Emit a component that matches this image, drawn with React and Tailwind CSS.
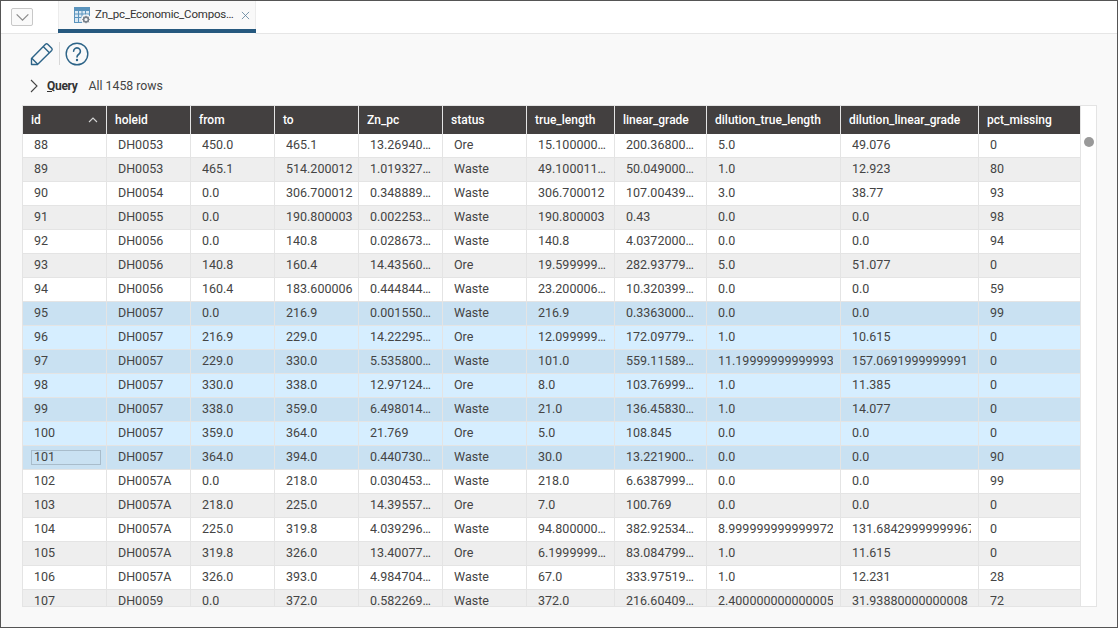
const columns = [
  { name: "id", width: "w-[84px]" },
  { name: "holeid", width: "w-[84px]" },
  { name: "from", width: "w-[84px]" },
  { name: "to", width: "w-[84px]" },
  { name: "Zn_pc", width: "w-[84px]" },
  { name: "status", width: "w-[84px]" },
  { name: "true_length", width: "w-[88px]" },
  { name: "linear_grade", width: "w-[92px]" },
  { name: "dilution_true_length", width: "w-[134px]" },
  { name: "dilution_linear_grade", width: "w-[138px]" },
  { name: "pct_missing", width: "w-[102px]" },
];

const rows = [
  ["88", "DH0053", "450.0", "465.1", "13.2694000000", "Ore", "15.1000000000", "200.3680000000", "5.0", "49.076", "0"],
  ["89", "DH0053", "465.1", "514.200012", "1.0193270000", "Waste", "49.1000110000", "50.0490000000", "1.0", "12.923", "80"],
  ["90", "DH0054", "0.0", "306.700012", "0.3488890000", "Waste", "306.700012", "107.0043900000", "3.0", "38.77", "93"],
  ["91", "DH0055", "0.0", "190.800003", "0.0022530000", "Waste", "190.800003", "0.43", "0.0", "0.0", "98"],
  ["92", "DH0056", "0.0", "140.8", "0.0286730000", "Waste", "140.8", "4.0372000000", "0.0", "0.0", "94"],
  ["93", "DH0056", "140.8", "160.4", "14.4356000000", "Ore", "19.5999990000", "282.9377900000", "5.0", "51.077", "0"],
  ["94", "DH0056", "160.4", "183.600006", "0.4448440000", "Waste", "23.2000060000", "10.3203990000", "0.0", "0.0", "59"],
  ["95", "DH0057", "0.0", "216.9", "0.0015500000", "Waste", "216.9", "0.3363000000", "0.0", "0.0", "99"],
  ["96", "DH0057", "216.9", "229.0", "14.2229500000", "Ore", "12.0999990000", "172.0977900000", "1.0", "10.615", "0"],
  ["97", "DH0057", "229.0", "330.0", "5.5358000000", "Waste", "101.0", "559.1158900000", "11.19999999999993", "157.0691999999991", "0"],
  ["98", "DH0057", "330.0", "338.0", "12.9712400000", "Ore", "8.0", "103.7699900000", "1.0", "11.385", "0"],
  ["99", "DH0057", "338.0", "359.0", "6.4980140000", "Waste", "21.0", "136.4583000000", "1.0", "14.077", "0"],
  ["100", "DH0057", "359.0", "364.0", "21.769", "Ore", "5.0", "108.845", "0.0", "0.0", "0"],
  ["101", "DH0057", "364.0", "394.0", "0.4407300000", "Waste", "30.0", "13.2219000000", "0.0", "0.0", "90"],
  ["102", "DH0057A", "0.0", "218.0", "0.0304530000", "Waste", "218.0", "6.6387999000", "0.0", "0.0", "99"],
  ["103", "DH0057A", "218.0", "225.0", "14.3955700000", "Ore", "7.0", "100.769", "0.0", "0.0", "0"],
  ["104", "DH0057A", "225.0", "319.8", "4.0392960000", "Waste", "94.8000000000", "382.9253400000", "8.999999999999972", "131.68429999999967", "0"],
  ["105", "DH0057A", "319.8", "326.0", "13.4007700000", "Ore", "6.1999999000", "83.0847990000", "1.0", "11.615", "0"],
  ["106", "DH0057A", "326.0", "393.0", "4.9847040000", "Waste", "67.0", "333.9751900000", "1.0", "12.231", "28"],
  ["107", "DH0059", "0.0", "372.0", "0.5822690000", "Waste", "372.0", "216.6040900000", "2.400000000000005", "31.93880000000008", "72"],
];

const rowColor = (id, index) => {
  const selected = id >= 95 && id <= 101;
  if (selected) return index % 2 ? "bg-[#c9e1f2]" : "bg-[#d6eeff]";
  return index % 2 ? "bg-[#eeeeee]" : "bg-white";
};

const cellPadding = (i) => {
  if (i === 0) return "pl-[8px] pr-[5px]";
  if (i === 3) return "pl-[11px] pr-[3px]";
  return "pl-[11px] pr-[7px]";
};

const TableIcon = () => (
  <svg width="17" height="17" viewBox="0 0 17 17" fill="none">
    <rect x="0.5" y="0.5" width="15" height="15" fill="#dbe9f4" stroke="#5b94bd" />
    <rect x="0.5" y="0.5" width="15" height="3.5" fill="#5b94bd" />
    <path d="M4.5 1v14M8 1v14M11.5 1v14M1 7h14M1 10.5h14" stroke="#5b94bd" />
    <circle cx="12" cy="12.5" r="5" fill="#f9f9f9" />
    <circle cx="12" cy="12.5" r="2.4" stroke="#77808a" strokeWidth="1.6" />
    <path d="M12 8.8v1.2M12 15v1.2M8.3 12.5h1.2M14.5 12.5h1.2M9.4 9.9l.8.8M13.8 14.3l.8.8M14.6 9.9l-.8.8M10.2 14.3l-.8.8" stroke="#77808a" strokeWidth="1.1" />
  </svg>
);

const PencilIcon = () => (
  <svg width="24" height="24" viewBox="0 0 24 24" fill="none" stroke="#2d6488" strokeWidth="1.4" strokeLinejoin="round">
    <path d="M1.5 22.5v-6L15.5 2.2a1.6 1.6 0 0 1 2.2 0l4 4a1.6 1.6 0 0 1 0 2.2L7.5 22.5z" />
    <path d="M13.2 4.6l6.2 6.2M1.8 16.3l5.9 5.9" />
  </svg>
);

const HelpIcon = () => (
  <svg width="24" height="24" viewBox="0 0 24 24" fill="none" stroke="#2d6488" strokeWidth="1.4" strokeLinecap="round">
    <circle cx="12" cy="12" r="10.8" />
    <path d="M8.6 9.2a3.4 3.4 0 1 1 5.4 2.8c-1.3.9-2 1.6-2 3" strokeWidth="1.6" />
    <circle cx="12" cy="18" r="0.6" fill="#2d6488" strokeWidth="1.2" />
  </svg>
);

export default function App() {
  return (
    <div className="w-[1118px] h-[628px] flex flex-col border border-[#555555] bg-[#f9f9f9] text-[#444444] font-['Roboto',sans-serif] text-[12.5px] overflow-hidden">
      <div className="h-[33px] shrink-0 flex bg-white border-b border-[#e6e6e6]">
        <div className="w-[57px] flex items-start pt-[7px] pl-[10px]">
          <div className="w-[22px] h-[18px] flex items-center justify-center rounded-[2px] border border-[#c8c8c8] bg-[#fafafa]">
            <svg width="15" height="9" viewBox="0 0 16 10" fill="none" stroke="#8c8c8c" strokeWidth="1.4">
              <path d="M1.5 1.5L8 8l6.5-6.5" />
            </svg>
          </div>
        </div>
        <div className="w-[198px] h-[33px] flex flex-col bg-[#f9f9f9] border-x border-[#ececec]">
          <div className="h-[28px] flex items-center pl-[15px] gap-[4px]">
            <TableIcon />
            <span className="w-[139px] truncate text-[#333333] text-[11.5px] tracking-[-0.2px]">Zn_pc_Economic_Composites</span>
            <svg className="ml-[3px]" width="9" height="9" viewBox="0 0 10 10" stroke="#5b7f99" strokeWidth="0.9">
              <path d="M1 1l8 8M9 1l-8 8" />
            </svg>
          </div>
          <div className="h-[4px] bg-[#26597f] -mx-px" />
        </div>
      </div>

      <div className="h-[39px] shrink-0 flex items-center pl-[29px]">
        <PencilIcon />
        <div className="w-px h-[23px] bg-[#d8d8d8] ml-[5px] mr-[5px]" />
        <HelpIcon />
      </div>

      <div className="h-[32px] shrink-0 flex items-center pl-[28px] pb-[6px]">
        <svg width="10" height="14" viewBox="0 0 10 14" fill="none" stroke="#444444" strokeWidth="1.1">
          <path d="M2 1l6 6-6 6" />
        </svg>
        <span className="ml-[8px] text-[12px] font-bold tracking-[-0.3px] text-[#333333]">
          <span className="underline">Q</span>uery
        </span>
        <span className="ml-[11px] text-[12.3px]">All 1458 rows</span>
      </div>

      <div className="ml-[21px] w-[1075px] h-[502px] shrink-0 flex border border-[#e4e4e4] bg-white overflow-hidden">
        <div className="w-[1058px] shrink-0 border-r border-[#e4e4e4]">
          <div className="h-[28px] flex bg-[#434040] text-white font-medium text-[12px]">
            {columns.map((col) => (
              <div key={col.name} className={`${col.width} shrink-0 flex items-center justify-between pl-[8px] pr-[8px] border-r border-[#e4e4e4] last:border-r-0`}>
                <span>{col.name}</span>
                {col.name === "id" && (
                  <svg width="10" height="6" viewBox="0 0 10 6" fill="none" stroke="#d5d5d5" strokeWidth="1.1">
                    <path d="M1 5l4-4 4 4" />
                  </svg>
                )}
              </div>
            ))}
          </div>
          {rows.map((row, index) => (
            <div key={row[0]} className={`h-[24px] flex border-b border-[#e4e4e4] ${rowColor(Number(row[0]), index)}`}>
              {row.map((value, i) => (
                <div key={i} className={`${columns[i].width} shrink-0 flex items-center border-r border-[#e4e4e4] last:border-r-0 ${cellPadding(i)}`}>
                  {i === 0 ? (
                    <span className={`block w-full h-[15px] mb-[1px] leading-[12px] pl-[2px] border ${row[0] === "101" ? "border-[#a8bccb]" : "border-transparent"}`}>
                      {value}
                    </span>
                  ) : (
                    <span className={`block w-full h-[16px] leading-[14px] whitespace-nowrap overflow-hidden ${i === 8 || i === 9 ? "text-clip" : "text-ellipsis"}`}>
                      {value}
                    </span>
                  )}
                </div>
              ))}
            </div>
          ))}
        </div>
        <div className="flex-1 pl-[3px] pt-[31px]">
          <div className="w-[10px] h-[10px] rounded-full bg-[#999999]" />
        </div>
      </div>
    </div>
  );
}
